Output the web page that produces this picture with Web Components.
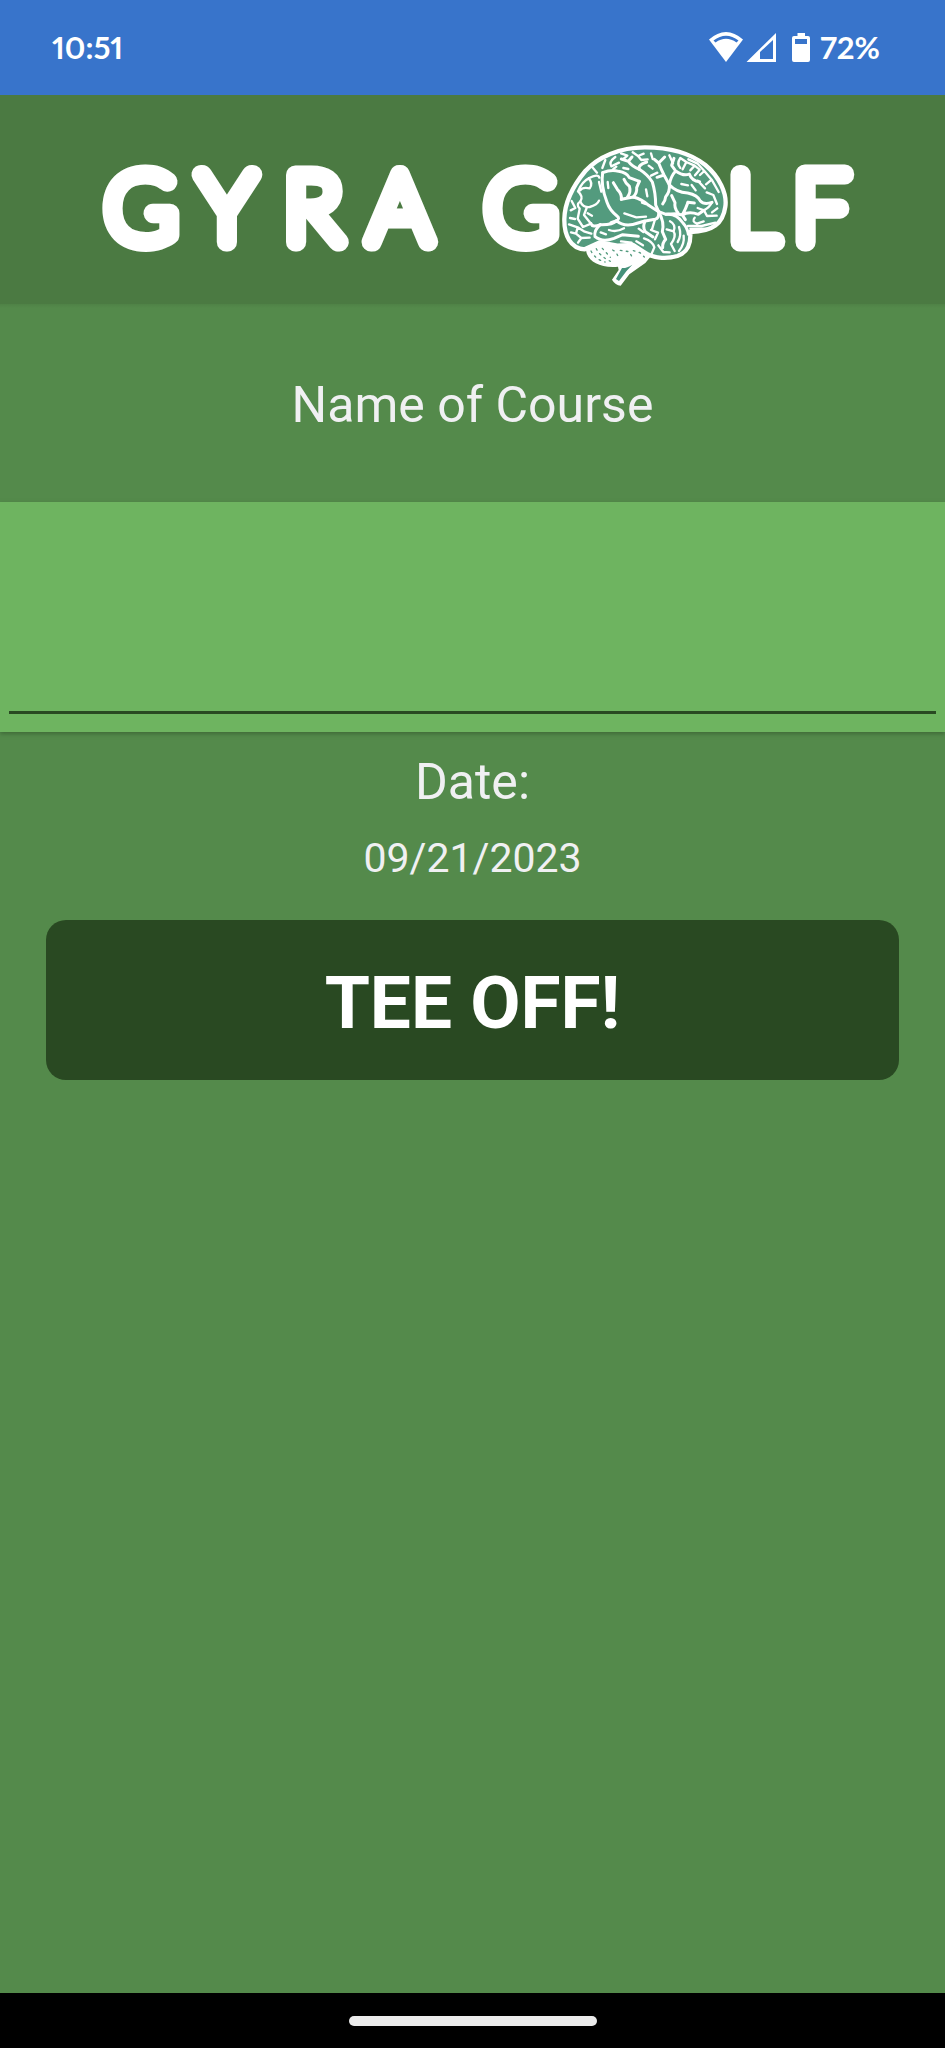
<!DOCTYPE html>
<html lang="en">
<head>
<meta charset="utf-8">
<meta name="viewport" content="width=device-width">
<title>Gyra Golf</title>
<style>
html,body{margin:0;min-height:100%}
body{font-family:Roboto,"Liberation Sans",sans-serif;background:#548a4b;color:#f0f0f2}
gyra-screen{min-height:100vh}
</style>
</head>
<body>
<gyra-screen>
  <status-bar slot="top" time="10:51" battery="72%"></status-bar>
  <gyra-header slot="top"></gyra-header>
  <course-field label="Name of Course"></course-field>
  <date-block label="Date:">09/21/2023</date-block>
  <primary-button>TEE OFF!</primary-button>
  <nav-bar slot="bottom"></nav-bar>
</gyra-screen>
<script>
function define(name, html) {
  const t = document.createElement('template');
  t.innerHTML = html;
  customElements.define(name, class extends HTMLElement {
    constructor() {
      super();
      this.attachShadow({mode: 'open'}).append(t.content.cloneNode(true));
    }
    connectedCallback() {
      this.shadowRoot.querySelectorAll('[data-attr]').forEach(n => {
        n.textContent = this.getAttribute(n.dataset.attr) || '';
      });
    }
  });
}

define('gyra-screen', `
<style>
:host{display:flex;flex-direction:column}
main{flex:1}
</style>
<slot name="top"></slot><main><slot></slot></main><slot name="bottom"></slot>`);

define('status-bar', `
<style>
:host{display:flex;align-items:center;justify-content:space-between;height:95px;padding:0 65px 2px 52px;box-sizing:border-box;background:#3874cb;color:#fff;font:bold 31px/40px Lato,"Liberation Sans",sans-serif;font-variant-numeric:proportional-nums}
div{display:flex;align-items:center}
svg{display:block;fill:#fff}
</style>
<span data-attr="time"></span>
<div>
<svg width="111" height="40" viewBox="0 0 111 40" aria-hidden="true">
<path d="M0 12.500Q17 -2.500 34 12.500L17 35Z"/>
<path d="M4.500 13.500Q17 4 29.500 13.500L27.500 15.500Q17 8 6.500 15.500Z" fill="#3874cb"/>
<path fill-rule="evenodd" d="M37.500 35L67 6V35ZM51 25V32H64V13Z"/>
<path fill-rule="evenodd" d="M88.500 6h7.500v3h3q2 0 2 2v22q0 2-2 2H85q-2 0-2-2V11q0-2 2-2h3.500ZM86 12v5h12v-5Z"/>
</svg>
<span data-attr="battery"></span>
</div>`);

define('gyra-header', `
<style>
:host{display:block;background:#4b7a42}
svg{display:block;width:100%}
text{font-family:Lato,"Liberation Sans",sans-serif;font-weight:100;font-size:97px;text-anchor:middle;fill:#fff;stroke:#fff;stroke-width:19px;stroke-linejoin:round;stroke-linecap:round}
.line path{fill:none;stroke:#fff;stroke-linecap:round;stroke-linejoin:round}
</style>
<svg viewBox="0 0 945 209" role="img" aria-label="Gyra Golf">
<text x="141" y="147">G</text><text x="227" y="147">Y</text><text x="313" y="147">R</text><text x="400" y="147">A</text>
<text x="521" y="147">G</text><text x="753" y="147">L</text><text x="821" y="147">F</text>
<g transform="translate(550 40) scale(.33333)">
<path fill="#fff" d="M108 346C112 378 148 400 204 395L206 405 186 434Q196 451 212 452L238 418 286 384 304 362 288 310 130 310Z"/>
<path fill="#539b7e" stroke="#fff" stroke-width="13" stroke-linejoin="round" d="M104 343C62 340 42 302 43 252C44 204 68 154 106 108C144 66 208 37 285 37C360 37 422 55 466 90C508 125 532 176 526 215C519 266 488 290 421 291C423 326 415 352 382 363C346 374 308 369 282 351L250 330 202 332 150 322Z"/>
<g class="line">
<g stroke-width="9">
<path d="M158 113C153 142 160 173 171 202Q179 226 201 243Q211 251 200 257L183 263"/>
<path d="M214 193L250 186Q275 192 296 211L326 230 348 238Q379 234 399 264Q413 280 415 298"/>
<path d="M214 193Q216 177 202 163L190 143M250 186Q262 172 260 158L268 139M232 187Q244 171 238 154Q227 146 222 133"/>
<path d="M158 113Q184 103 206 109Q230 113 238 128L268 139"/>
<path d="M268 103Q293 119 307 141Q317 174 317 210L326 230"/>
<path d="M268 103Q264 94 278 86L290 81M268 103Q246 94 235 79L214 72M235 79L246 66"/>
<path d="M326 230Q328 250 315 253L286 258Q276 274 286 290L309 306"/>
<path d="M326 230Q344 260 337 290L347 313Q337 323 338 338"/>
<path d="M358 149Q360 171 347 185Q346 198 338 207M358 149Q378 171 413 174Q443 180 451 198Q462 210 486 202"/>
<path d="M358 149Q362 124 377 108L365 91 372 70M377 108Q401 125 418 117Q426 139 449 140"/>
<path d="M326 84Q333 102 342 120L358 149M326 84L344 66M326 84L313 73M321 127L342 120"/>
<path d="M348 238L377 236 397 240Q408 220 414 202M397 240Q416 228 445 238L462 226M397 240L406 254"/>
<path d="M384 233Q372 219 375 203L365 182M414 202L433 204"/>
<path d="M199 257Q224 279 264 264L284 258M199 257Q188 270 151 269Q127 278 123 266"/>
<path d="M151 269Q131 286 135 305Q157 323 192 310L218 299 265 304"/>
</g>
<g stroke-width="7">
<path d="M116 130Q145 115 148 128M116 130Q130 144 119 160M116 130Q96 140 84 169M84 169Q101 184 91 199Q98 218 119 216Q142 210 147 197M119 160Q96 156 91 166M147 141L154 170"/>
<path d="M91 199Q77 209 89 221L83 251 99 276 123 266M111 216L102 240 123 266M65 198L76 219 62 226M60 249L75 252M57 268L83 277 104 290 124 296M83 277L78 296 63 292M78 296L94 309 84 323M94 309L119 308M113 235L126 242"/>
<path d="M124 93L141 113M166 75L157 99M196 66Q175 81 184 94L207 83M213 55L232 62 220 72M248 52L264 63 281 56M264 63L274 75 293 73M303 55L308 72M296 92L308 101M303 122L322 113M358 61L369 85M391 69Q379 87 391 99M391 69L409 81 398 103M409 81L434 92 421 106M434 92L449 104 435 121"/>
<path d="M415 73L443 86 463 108 450 120M463 108L485 134 468 148M443 137L465 160M485 134L506 171M470 172L490 180 501 207M425 150L437 166M394 147L414 151M486 202Q479 217 462 226L471 243 500 242M462 226L443 219M502 220L486 232M434 248Q424 260 441 266L461 259M414 273L455 273 496 263M421 282L471 281"/>
<path d="M360 259Q379 269 371 289L350 283M371 289Q380 303 363 327L374 348M387 276Q396 301 383 321M401 302Q404 328 387 348M315 253L306 283M303 285L324 293 315 313M282 310Q309 319 313 337L305 356M325 331L340 351 359 352M266 281L280 291M259 319L279 331M213 319L245 323"/>
<path d="M177 285Q199 293 222 280M152 292L168 298M223 235L259 247 288 245M173 141L175 159M220 99L235 102M199 95L190 102M288 163L292 184M276 203L286 207"/>
</g>
</g>
<g fill="none" stroke="#539b7e" stroke-width="4" stroke-dasharray="5 13" stroke-linecap="round">
<path d="M123 348Q137 374 165 381M139 341Q150 364 181 379M157 340L181 367M188 345Q203 353 207 374M211 346L237 350 247 367M250 347L270 353 283 366"/>
</g>
<path fill="#45917a" d="M216 399Q230 400 247 389L229 409 207 438 198 432Z"/>
</g>
</svg>`);

define('course-field', `
<style>
:host{display:block}
label{display:block;padding:63px 16px 59px;font-size:50px;line-height:76px;text-align:center;background:linear-gradient(#4f8246,#548a4b 4px)}
div{position:relative;padding:0 9px 18px;background:#6eb460;box-shadow:0 2px 4px #3f6a38}
input{display:block;width:100%;height:212px;box-sizing:border-box;margin:0;padding:0 8px;border:0;border-bottom:3px solid #294922;border-radius:0;outline:0;background:none;color:#294922;font:inherit;font-size:50px;text-align:center}
</style>
<label for="course" data-attr="label"></label>
<div><input id="course" type="text" autocomplete="off"></div>`);

define('date-block', `
<style>
:host{display:block;padding:12px 16px 24px;text-align:center;font-size:41px;line-height:76px}
.label{font-size:50px}
</style>
<div class="label" data-attr="label"></div><div><slot></slot></div>`);

define('primary-button', `
<style>
:host{display:block;padding:0 46px}
button{display:block;width:100%;height:160px;margin:0;padding:6px 0 0;border:0;border-radius:20px;background:#294922;color:#fff;font:bold 73px/88px Roboto,"Liberation Sans",sans-serif}
</style>
<button type="button"><slot></slot></button>`);

define('nav-bar', `
<style>
:host{display:flex;align-items:center;justify-content:center;height:55px;background:#000}
span{width:248px;height:10px;border-radius:5px;background:#ebebeb}
</style>
<span></span>`);
</script>
</body>
</html>
